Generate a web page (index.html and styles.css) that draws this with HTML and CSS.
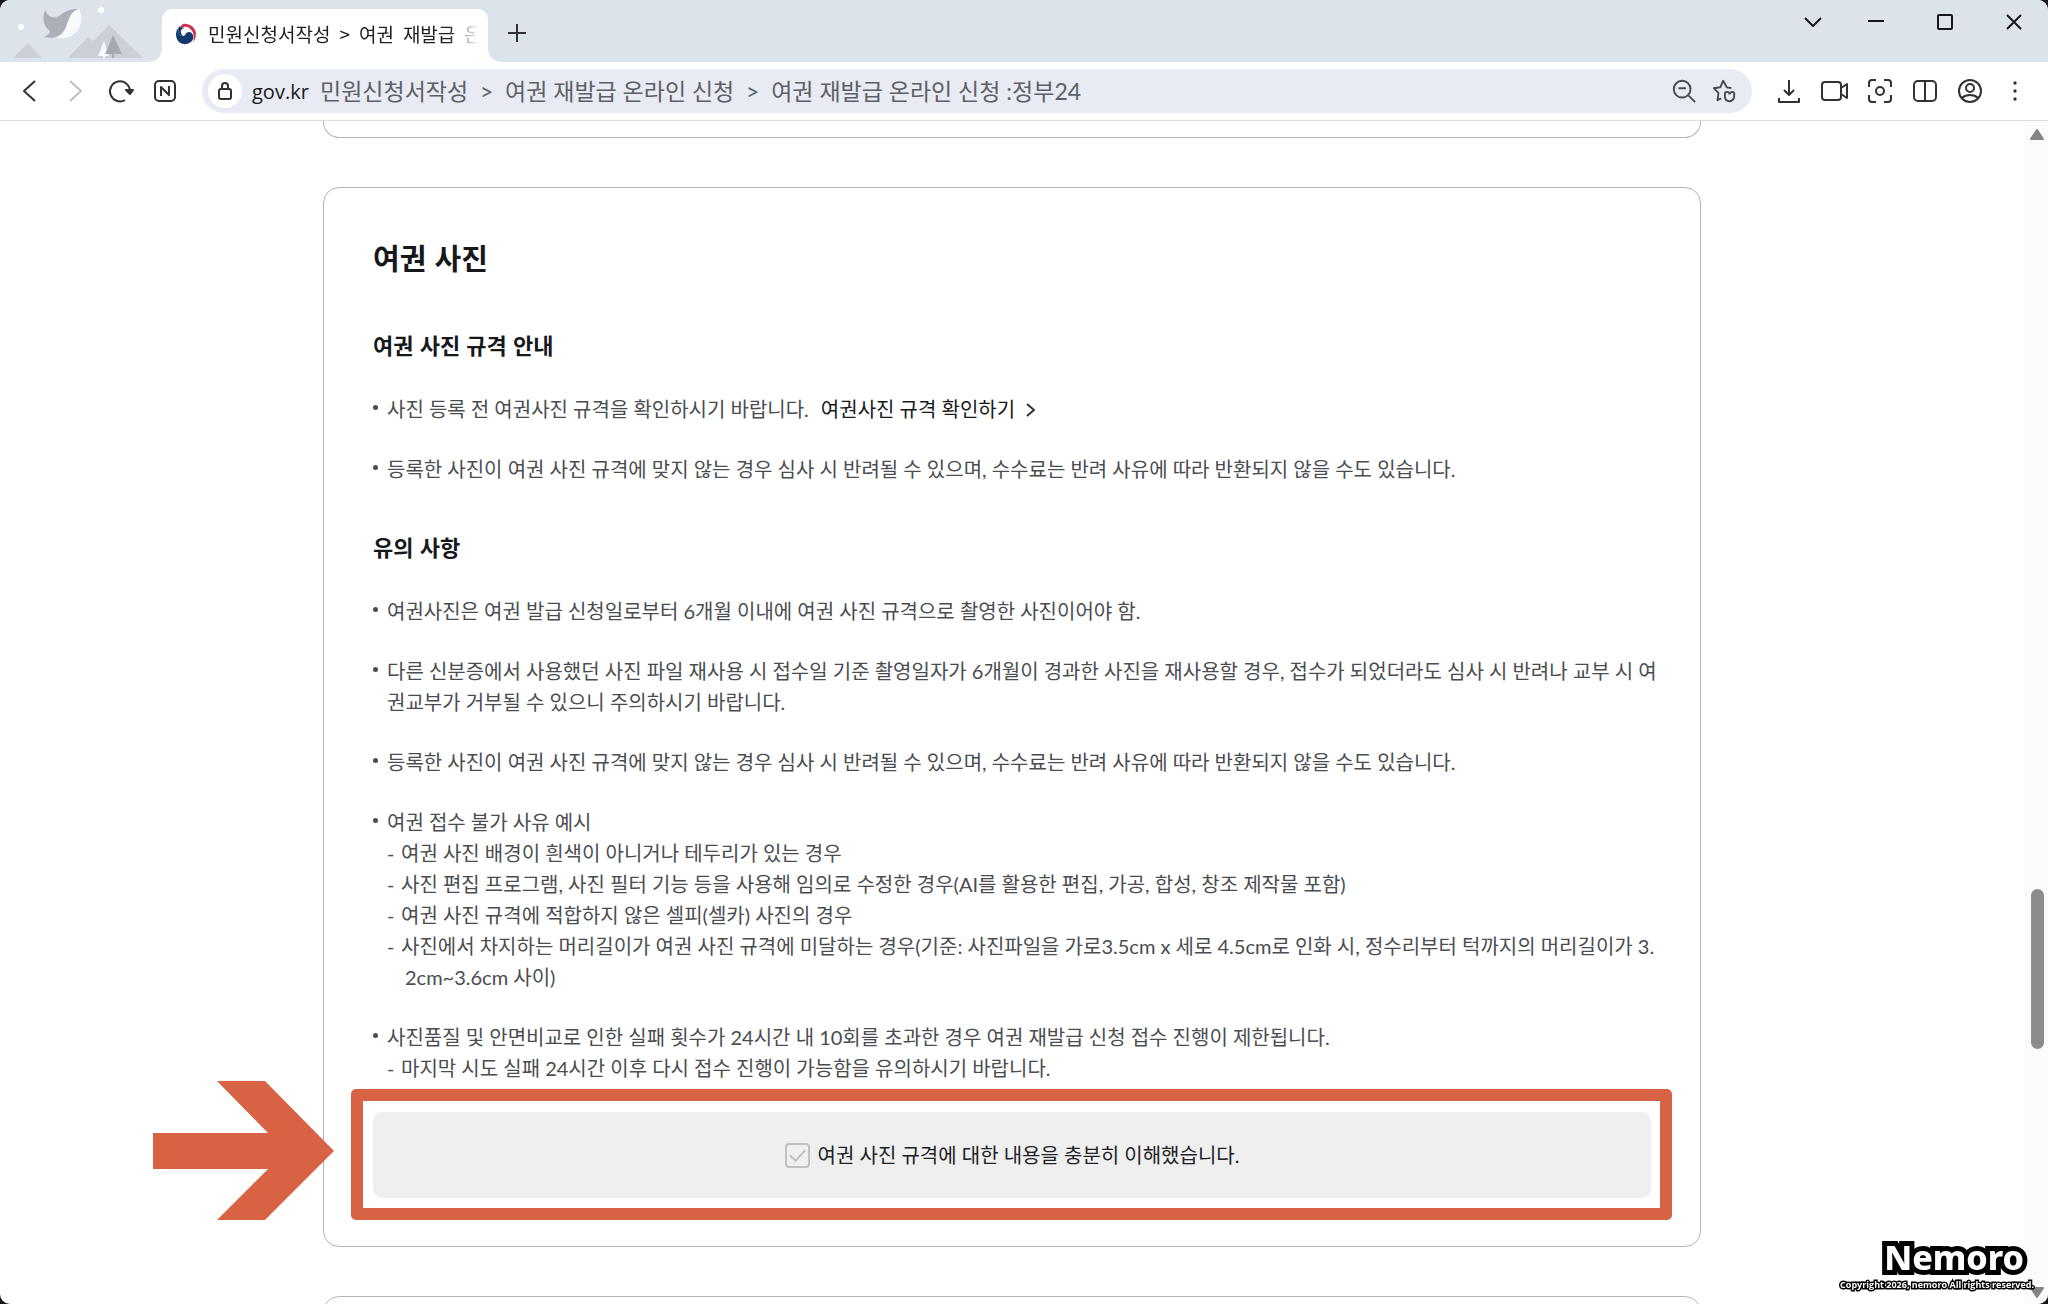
FILE: index.html
```html
<!DOCTYPE html>
<html lang="ko">
<head>
<meta charset="utf-8">
<meta name="viewport" content="width=device-width, initial-scale=1">
<title>민원신청서작성 &gt; 여권 재발급 온라인 신청</title>
<link rel="stylesheet" href="styles.css">
</head>
<body>
<div class="window">
  <header class="tabstrip">
    <svg class="theme-art" viewBox="0 0 150 62" aria-hidden="true">
      <circle cx="21" cy="27" r="3" fill="#fff"/>
      <circle cx="101" cy="10" r="3" fill="#fff"/>
      <path d="M13 58 28 43 42 58Z" fill="#cbd0d8"/>
      <path d="M68 58 88 37 93 41 109 25 143 58Z" fill="#cbd0d8"/>
      <path d="M79 9C84 18 81 29 73 35C67 39 60 39 56 37C66 33 65 22 69 16C71 12 75 10 79 9Z" fill="#f8fafc"/>
      <path d="M45 10C48 17 53 18 57 17C62 15 65 9 78 9C67 14 69 24 64 31C60 37 53 39 44 37C48 35 50 33 50 31C43 26 42 18 45 10Z" fill="#abb0b8"/>
      <path d="M104 41 98 56H103V58H105V56H109Z" fill="#f8fafc"/>
      <path d="M113 35 105 54H112V58H114V54H122Z" fill="#a4a9b2"/>
    </svg>
    <div class="tab">
      <svg class="favicon" viewBox="0 0 22 22" aria-hidden="true">
        <path d="M6 2C12 0 18 2 20 7C22 12 20 18 15 20C19 15 18 10 14 9C10 9 10 13 7 12C2 10 3 4 6 2Z" fill="#fff"/>
        <path d="M4 4C0 8 0 15 4 19C9 23 16 21 18 16C19 12 17 9 14 9C10 9 11 13 8 13C4 13 2 9 4 4Z" fill="#123a6d"/>
        <path d="M4 4C2 9 4 13 8 13C4 9 6 5 10 5C5 4 5 3 4 4Z" fill="#123a6d"/>
        <path d="M8 1C14 0 20 4 21 10C21 14 20 17 18 19C20 13 18 7 14 5C11 3 9 4 6 5C5 4 6 2 8 1Z" fill="#cd3350"/>
      </svg>
      <div class="tab-title"><span>민원신청서작성</span><span>&gt;</span><span>여권</span><span>재발급</span><span>온</span></div>
    </div>
    <button class="new-tab" aria-label="새 탭"><svg viewBox="0 0 20 20"><path d="M10 1V19M1 10H19"/></svg></button>
    <div class="window-controls">
      <button class="tab-list" aria-label="탭 목록"><svg viewBox="0 0 20 20"><path d="M2 6 10 14 18 6"/></svg></button>
      <button class="win-button" aria-label="최소화"><svg viewBox="0 0 20 20"><path d="M2 9H18"/></svg></button>
      <button class="win-button" aria-label="최대화"><svg viewBox="0 0 20 20"><rect x="3" y="3" width="14" height="14" rx="1"/></svg></button>
      <button class="win-button" aria-label="닫기"><svg viewBox="0 0 20 20"><path d="M3 3 17 17M17 3 3 17"/></svg></button>
    </div>
  </header>

  <div class="toolbar">
    <button class="tool" aria-label="뒤로"><svg viewBox="0 0 28 28"><path d="M19 4 8 14 19 24"/></svg></button>
    <button class="tool tool-off" aria-label="앞으로"><svg viewBox="0 0 28 28"><path d="M9 4 20 14 9 24"/></svg></button>
    <button class="tool" aria-label="새로고침"><svg viewBox="0 0 28 28"><path d="M19 23A10 10 0 1 1 24 14"/><path d="M20 13H27L24 17Z" class="solid"/></svg></button>
    <button class="tool" aria-label="네이버"><svg viewBox="0 0 28 28"><rect x="4" y="4" width="20" height="20" rx="4"/><path d="M10 19V10L18 18V9"/></svg></button>
    <div class="address">
      <button class="lock" aria-label="사이트 정보"><svg viewBox="0 0 20 20"><rect x="4" y="8" width="12" height="10" rx="2"/><path d="M7 8V5A3 3 0 0 1 13 5V8"/></svg></button>
      <label class="host" for="url">gov.kr</label>
      <input class="url" id="url" type="text" value="민원신청서작성  &gt;  여권 재발급 온라인 신청  &gt;  여권 재발급 온라인 신청 :정부24">
      <button class="address-tool" aria-label="축소"><svg viewBox="0 0 28 28"><circle cx="12" cy="12" r="9"/><path d="M8 11H16M19 19 26 26"/></svg></button>
      <button class="address-tool" aria-label="즐겨찾기"><svg viewBox="0 0 28 28"><path d="M22 11 17 10 13 3 10 10 3 11 8 16 7 24 11 22"/><path d="M15 16C17 14 19 15 20 17C21 15 24 14 25 16V20C25 23 22 25 20 25C17 25 15 23 15 20Z"/></svg></button>
    </div>
    <button class="tool" aria-label="다운로드"><svg viewBox="0 0 28 28"><path d="M13 3V18M8 13 13 18 18 13M3 21V25H23V21"/></svg></button>
    <button class="tool" aria-label="화면 녹화"><svg viewBox="0 0 28 28"><rect x="1" y="5" width="19" height="18" rx="3"/><path d="M20 11 26 7V21L20 17"/></svg></button>
    <button class="tool" aria-label="캡처"><svg viewBox="0 0 28 28"><circle cx="14" cy="14" r="4"/><path d="M3 10V6A3 3 0 0 1 6 3H10M18 3H22A3 3 0 0 1 25 6V10M25 18V22A3 3 0 0 1 22 25H18M10 25H6A3 3 0 0 1 3 22V18"/></svg></button>
    <button class="tool" aria-label="분할 화면"><svg viewBox="0 0 28 28"><rect x="3" y="4" width="22" height="20" rx="4"/><path d="M14 4V24"/></svg></button>
    <button class="tool" aria-label="프로필"><svg viewBox="0 0 28 28"><circle cx="14" cy="14" r="11"/><circle cx="14" cy="11" r="4"/><path d="M6 21C10 17 18 17 22 21"/></svg></button>
    <button class="tool" aria-label="메뉴"><svg class="dots" viewBox="0 0 28 28"><circle cx="14" cy="6" r="1.7"/><circle cx="14" cy="14" r="1.7"/><circle cx="14" cy="22" r="1.7"/></svg></button>
  </div>

  <div class="viewport">
    <main class="page">
      <section class="card card-previous"></section>
      <section class="card card-photo">
        <h1>여권 사진</h1>
        <h2>여권 사진 규격 안내</h2>
        <ul class="notes">
          <li>사진 등록 전 여권사진 규격을 확인하시기 바랍니다.<a class="spec-link" href="#spec">여권사진 규격 확인하기<svg viewBox="0 0 12 16" aria-hidden="true"><path d="M2 2 9 8 2 14"/></svg></a></li>
          <li>등록한 사진이 여권 사진 규격에 맞지 않는 경우 심사 시 반려될 수 있으며, 수수료는 반려 사유에 따라 반환되지 않을 수도 있습니다.</li>
        </ul>
        <h2>유의 사항</h2>
        <ul class="notes">
          <li>여권사진은 여권 발급 신청일로부터 6개월 이내에 여권 사진 규격으로 촬영한 사진이어야 함.</li>
          <li>다른 신분증에서 사용했던 사진 파일 재사용 시 접수일 기준 촬영일자가 6개월이 경과한 사진을 재사용할 경우, 접수가 되었더라도 심사 시 반려나 교부 시 여권교부가 거부될 수 있으니 주의하시기 바랍니다.</li>
          <li>등록한 사진이 여권 사진 규격에 맞지 않는 경우 심사 시 반려될 수 있으며, 수수료는 반려 사유에 따라 반환되지 않을 수도 있습니다.</li>
          <li>여권 접수 불가 사유 예시
            <ul class="examples">
              <li><span class="dash">-</span>여권 사진 배경이 흰색이 아니거나 테두리가 있는 경우</li>
              <li><span class="dash">-</span>사진 편집 프로그램, 사진 필터 기능 등을 사용해 임의로 수정한 경우(AI를 활용한 편집, 가공, 합성, 창조 제작물 포함)</li>
              <li><span class="dash">-</span>여권 사진 규격에 적합하지 않은 셀피(셀카) 사진의 경우</li>
              <li><span class="dash">-</span>사진에서 차지하는 머리길이가 여권 사진 규격에 미달하는 경우(기준: 사진파일을 가로3.5cm x 세로 4.5cm로 인화 시, 정수리부터 턱까지의 머리길이가 3.2cm~3.6cm 사이)</li>
            </ul>
          </li>
          <li>사진품질 및 안면비교로 인한 실패 횟수가 24시간 내 10회를 초과한 경우 여권 재발급 신청 접수 진행이 제한됩니다.
            <ul class="examples">
              <li><span class="dash">-</span>마지막 시도 실패 24시간 이후 다시 접수 진행이 가능함을 유의하시기 바랍니다.</li>
            </ul>
          </li>
        </ul>
        <div class="consent">
          <input class="consent-box" id="consent" type="checkbox">
          <label for="consent">여권 사진 규격에 대한 내용을 충분히 이해했습니다.</label>
          <div class="highlight"></div>
          <svg class="arrow" viewBox="0 0 181 139" aria-hidden="true"><path d="M0 52H115L64 0H112L181 70 112 139H64L115 88H0Z"/></svg>
        </div>
      </section>
      <section class="card card-next"></section>
    </main>
    <div class="scrollbar" aria-hidden="true">
      <svg viewBox="0 0 14 11"><path d="M7 1 13 10H1Z"/></svg>
      <div class="track"><div class="thumb"></div></div>
      <svg viewBox="0 0 14 11"><path d="M7 10 1 1H13Z"/></svg>
    </div>
  </div>
</div>
<div class="watermark">
  <div class="mark-name">Nemoro</div>
  <div class="mark-copy">Copyright 2026, nemoro All rights reserved.</div>
</div>
</body>
</html>
```
FILE: styles.css
```css
* {
  box-sizing: border-box;
}

body {
  margin: 0;
  background: #15171a;
  color: #4a4c50;
  font-family: Lato, "Noto Sans CJK KR", sans-serif;
  font-size: 20px;
  line-height: 31px;
}

button {
  display: flex;
  align-items: center;
  justify-content: center;
  flex: none;
  padding: 0;
  border: 0;
  background: none;
}

svg {
  display: block;
  flex: none;
  fill: none;
  stroke: #303238;
  stroke-width: 2;
  stroke-linejoin: round;
}

ul {
  margin: 0;
  padding: 0;
  list-style: none;
}

.window {
  display: flex;
  flex-direction: column;
  height: 100vh;
  overflow: hidden;
  border-radius: 10px;
  background: #fff;
}

/* Tab strip */
.tabstrip {
  display: flex;
  flex: none;
  height: 62px;
  background: #dde3eb;
}

.theme-art {
  width: 150px;
  height: 62px;
  margin-right: 12px;
  stroke: none;
}

.tab {
  position: relative;
  display: flex;
  align-items: center;
  gap: 11px;
  width: 326px;
  margin-top: 9px;
  padding: 0 12px 4px 13px;
  border-radius: 10px 10px 0 0;
  background: #fff;
}

.tab::before,
.tab::after {
  content: "";
  position: absolute;
  bottom: 0;
  width: 12px;
  height: 12px;
}

.tab::before {
  right: 100%;
  background: radial-gradient(circle at 0 0, transparent 11px, #fff 12px);
}

.tab::after {
  left: 100%;
  background: radial-gradient(circle at 100% 0, transparent 11px, #fff 12px);
}

.favicon {
  width: 22px;
  height: 22px;
  stroke: none;
}

.tab-title {
  display: flex;
  flex: 1;
  gap: 9px;
  color: #1d1f23;
  font-family: "Noto Sans CJK KR", sans-serif;
  font-size: 19px;
  white-space: nowrap;
  mask-image: linear-gradient(to right, #000 240px, transparent 270px);
}

.new-tab {
  width: 58px;
  margin-top: 4px;
}

.new-tab svg {
  width: 20px;
  height: 20px;
}

.window-controls {
  display: flex;
  height: 43px;
  margin-left: auto;
}

.window-controls svg {
  width: 20px;
  height: 20px;
  stroke: #17181b;
}

.tab-list {
  width: 56px;
}

.win-button {
  width: 69px;
}

/* Toolbar */
.toolbar {
  display: flex;
  flex: none;
  align-items: center;
  height: 59px;
  padding: 0 11px 0 7px;
  border-bottom: 1px solid #dcdde0;
}

.tool {
  width: 45px;
  height: 44px;
}

.tool svg {
  width: 28px;
  height: 28px;
}

.tool-off svg {
  stroke: #bdbfc3;
}

.solid {
  fill: #303238;
}

.tool .dots {
  fill: #303238;
  stroke: none;
}

.address {
  display: flex;
  flex: 1;
  align-items: center;
  min-width: 0;
  height: 44px;
  margin: 0 15px;
  padding: 0 8px 0 6px;
  border-radius: 22px;
  background: #e8ebf3;
}

.lock {
  width: 34px;
  height: 34px;
  border-radius: 50%;
  background: #fff;
}

.lock svg {
  width: 20px;
  height: 20px;
}

.host {
  width: 68px;
  margin-left: 10px;
  color: #17181b;
  font-family: "Open Sans", "Noto Sans CJK KR", sans-serif;
  font-size: 20px;
}

.url {
  flex: 1;
  min-width: 0;
  height: 40px;
  padding: 0 0 2px;
  border: 0;
  outline: 0;
  background: none;
  color: #5d6066;
  font-family: Lato, "Noto Sans CJK KR", sans-serif;
  font-size: 23px;
}

.address-tool {
  width: 40px;
  height: 40px;
}

.address-tool svg {
  width: 26px;
  height: 26px;
  stroke: #45484e;
}

/* Page */
.viewport {
  display: flex;
  flex: 1;
  min-height: 0;
}

.page {
  display: flex;
  flex: 1;
  flex-direction: column;
  gap: 49px;
  align-items: center;
  min-width: 0;
  overflow: hidden;
}

.card {
  flex: none;
  width: 100%;
  max-width: 1378px;
  border: 1px solid #b4b5b8;
  border-radius: 16px;
}

.card-previous {
  height: 17px;
  border-top: 0;
  border-radius: 0 0 16px 16px;
}

.card-next {
  height: 300px;
}

.card-photo {
  padding: 47px 49px 48px;
}

h1,
h2 {
  margin: 0;
  color: #17181b;
  font-family: "Noto Sans CJK KR", sans-serif;
  font-weight: 700;
}

h1 {
  margin-bottom: 49px;
  font-size: 29px;
  line-height: 44px;
}

h2 {
  margin-bottom: 34px;
  font-size: 22px;
  line-height: 32px;
}

.notes {
  display: flex;
  flex-direction: column;
  gap: 29px;
  margin-right: -9px;
}

.notes + h2 {
  margin-top: 45px;
}

.notes > li {
  position: relative;
  padding-left: 14px;
  word-break: break-all;
}

.notes > li::before {
  content: "";
  position: absolute;
  top: 11px;
  left: 0;
  width: 5px;
  height: 5px;
  border-radius: 50%;
  background: #4a4c50;
}

.examples > li {
  padding-left: 18px;
  text-indent: -18px;
}

.dash {
  display: inline-block;
  width: 14px;
  text-indent: 0;
}

.spec-link {
  display: inline-flex;
  gap: 10px;
  align-items: center;
  margin-left: 12px;
  color: #17181b;
  text-decoration: none;
}

.spec-link svg {
  width: 12px;
  height: 16px;
}

.consent {
  position: relative;
  display: flex;
  gap: 8px;
  align-items: center;
  justify-content: center;
  height: 86px;
  margin-top: 28px;
  border-radius: 10px;
  background: #efefef;
  color: #202226;
}

.consent-box {
  width: 25px;
  height: 25px;
  margin: 0;
  border: 2px solid #bfc0c2;
  border-radius: 4px;
  appearance: none;
}

.consent-box::before {
  content: "";
  display: block;
  width: 7px;
  height: 13px;
  margin: 1px auto;
  border: solid #bfc0c2;
  border-width: 0 2px 2px 0;
  transform: rotate(42deg);
}

.highlight {
  position: absolute;
  inset: -23px -21px -22px -22px;
  border: 12px solid #d86344;
  border-radius: 5px;
}

.arrow {
  position: absolute;
  top: -31px;
  left: -220px;
  width: 181px;
  height: 139px;
  fill: #d86344;
  stroke: none;
}

/* Scrollbar */
.scrollbar {
  display: flex;
  flex: none;
  flex-direction: column;
  align-items: center;
  width: 24px;
  padding: 8px 0 6px 2px;
  background: #fbfbfb;
}

.scrollbar svg {
  width: 14px;
  height: 11px;
  fill: #858585;
  stroke: #858585;
}

.track {
  display: flex;
  flex: 1;
  flex-direction: column;
  align-items: center;
}

.track::before {
  content: "";
  height: calc(65% + 3px);
}

.thumb {
  width: 13px;
  height: 14%;
  border-radius: 7px;
  background: #8c8c8c;
}

/* Watermark */
.watermark {
  position: fixed;
  right: 14px;
  bottom: 11px;
  color: #fff;
  font-weight: 700;
  text-align: right;
  -webkit-text-stroke-color: #000;
  paint-order: stroke fill;
}

.mark-name {
  margin-right: 10px;
  font-family: "Noto Sans", sans-serif;
  font-size: 34px;
  font-weight: 800;
  line-height: 40px;
  -webkit-text-stroke-width: 10px;
  stroke-linejoin: round;
}

.mark-copy {
  font-family: "Open Sans", sans-serif;
  font-size: 9px;
  line-height: 16px;
  -webkit-text-stroke-width: 3px;
}
```
